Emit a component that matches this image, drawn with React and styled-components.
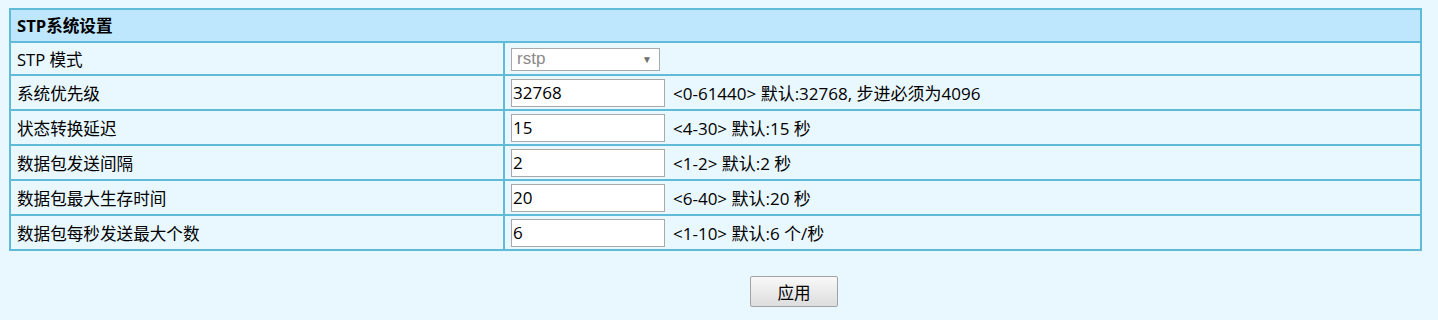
import React from "react";
import styled, { createGlobalStyle } from "styled-components";

const FONT = `"Open Sans", "Noto Sans CJK SC", "Noto Sans", sans-serif`;

const Global = createGlobalStyle`
  html, body { margin: 0; padding: 0; background: #e9f7fe; }
  body { font-family: ${FONT}; color: #000; }
`;

const Page = styled.div`
  padding: 8px 16px 20px 9px;
`;

const Table = styled.table`
  width: 1413px;
  border: 2px solid #5fbbd7;
  border-collapse: separate;
  border-spacing: 0;
  font-size: 16.6px;
`;

const HeadCell = styled.th`
  height: 31px;
  padding: 0 0 0 6px;
  background: #bee6fc;
  text-align: left;
  font-weight: 700;
  font-size: 16.6px;
  line-height: 31px;
`;

const Row = styled.tr``;

const LabelCell = styled.td`
  width: 486px;
  height: ${(p) => p.$h}px;
  padding: 0 0 0 6px;
  border-top: 2px solid #5fbbd7;
  border-right: 2px solid #5fbbd7;
  vertical-align: middle;
  white-space: nowrap;
`;

const ValueCell = styled.td`
  height: ${(p) => p.$h}px;
  padding: 0 0 0 6px;
  border-top: 2px solid #5fbbd7;
  vertical-align: middle;
`;

const Field = styled.div`
  display: flex;
  align-items: center;
  gap: 8px;
`;

const SelectBox = styled.div`
  box-sizing: border-box;
  width: 149px;
  height: 23px;
  margin-top: 1px;
  border: 1px solid #a9a9a9;
  background: #fff;
  display: flex;
  align-items: center;
  justify-content: space-between;
  padding: 0 7px 0 5px;
  color: #8a8a8a;
  font-family: "Liberation Sans", Arial, sans-serif;
  font-size: 17px;
`;

const Arrow = styled.span`
  font-size: 10px;
  color: #707070;
`;

const Input = styled.input`
  box-sizing: border-box;
  width: 154px;
  height: 28px;
  margin: 0;
  padding: 0 1px;
  border: 1px solid #a9a9a9;
  background: #fff;
  font-family: ${FONT};
  font-size: 17px;
  color: #000;
  outline: none;
`;

const Hint = styled.span`
  white-space: nowrap;
  font-size: 17px;
`;

const Actions = styled.div`
  padding: 25px 0 0 741px;
`;

const Button = styled.button`
  box-sizing: border-box;
  width: 88px;
  height: 31px;
  border: 1px solid #a3a3a3;
  border-radius: 2px;
  background: linear-gradient(#f8f8f8, #dddddd);
  font-family: ${FONT};
  font-size: 16.6px;
  color: #000;
  padding: 0;
`;

const rows = [
  { label: "系统优先级", value: "32768", hint: "<0-61440> 默认:32768, 步进必须为4096" },
  { label: "状态转换延迟", value: "15", hint: "<4-30> 默认:15 秒" },
  { label: "数据包发送间隔", value: "2", hint: "<1-2> 默认:2 秒" },
  { label: "数据包最大生存时间", value: "20", hint: "<6-40> 默认:20 秒" },
  { label: "数据包每秒发送最大个数", value: "6", hint: "<1-10> 默认:6 个/秒" },
];

export default function App() {
  return (
    <>
      <Global />
      <Page>
        <Table>
          <thead>
            <tr>
              <HeadCell colSpan={2}>STP系统设置</HeadCell>
            </tr>
          </thead>
          <tbody>
            <Row>
              <LabelCell $h={31}>STP 模式</LabelCell>
              <ValueCell $h={31}>
                <SelectBox>
                  <span>rstp</span>
                  <Arrow>▼</Arrow>
                </SelectBox>
              </ValueCell>
            </Row>
            {rows.map((r) => (
              <Row key={r.label}>
                <LabelCell $h={33}>{r.label}</LabelCell>
                <ValueCell $h={33}>
                  <Field>
                    <Input defaultValue={r.value} />
                    <Hint>{r.hint}</Hint>
                  </Field>
                </ValueCell>
              </Row>
            ))}
          </tbody>
        </Table>
        <Actions>
          <Button>应用</Button>
        </Actions>
      </Page>
    </>
  );
}
